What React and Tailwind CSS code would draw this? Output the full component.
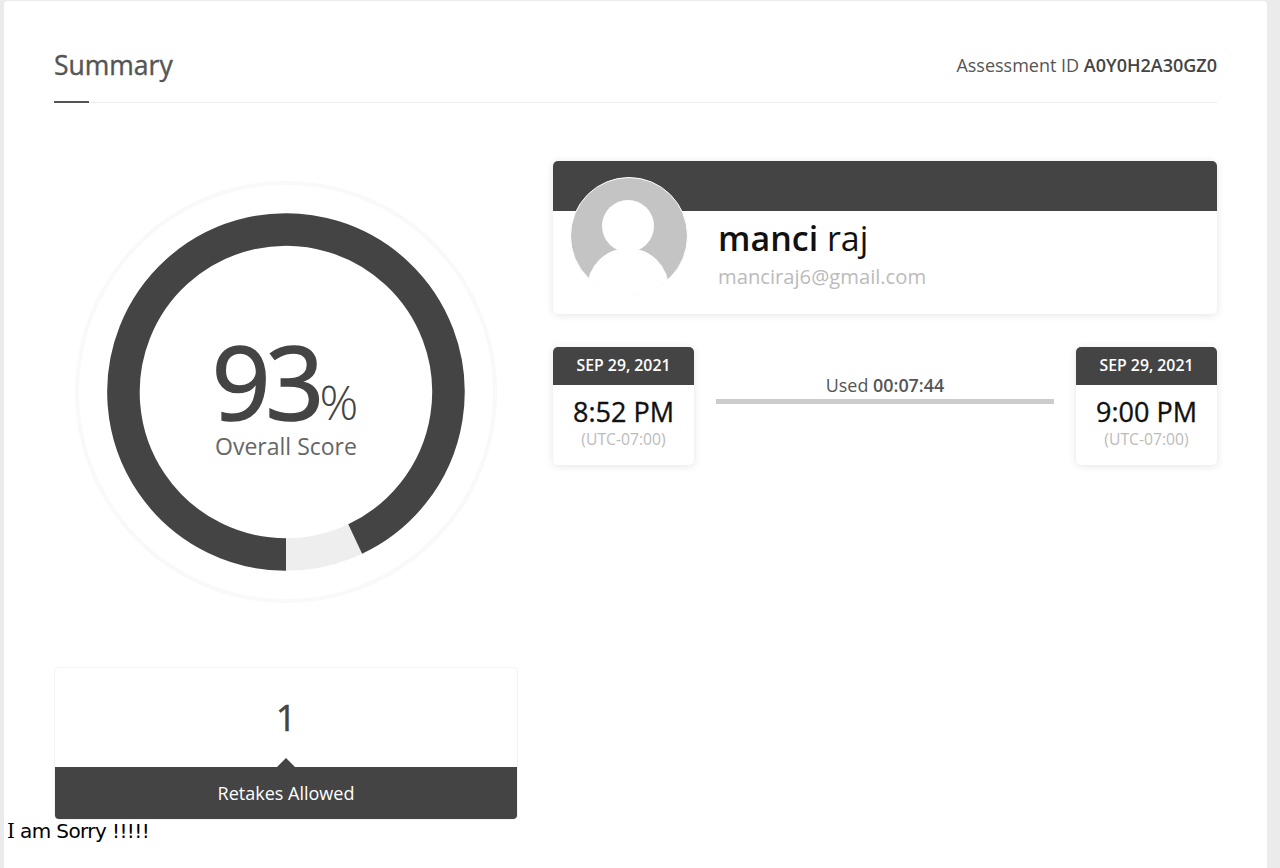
import React from 'react';

const sans = "font-['Open_Sans',sans-serif]";

const TimeCard = ({ date, time }) => (
  <div className="w-[141px] h-[118px] rounded-[5px] bg-white shadow-[0_1px_8px_rgba(0,0,0,0.11)] overflow-hidden shrink-0 text-center">
    <div className="h-[38px] bg-[#444444] text-white text-[15.8px] font-semibold leading-[37px]">{date}</div>
    <div className="mt-[10px] text-[27px] [-webkit-text-stroke:0.35px] leading-[34px] text-[#111111]">{time}</div>
    <div className="text-[15.7px] leading-[20px] text-[#bbbbbb]">(UTC-07:00)</div>
  </div>
);

const ScoreRing = () => (
  <div className="relative w-[424px] h-[424px]">
    <svg width="424" height="424" viewBox="0 0 424 424">
      <circle cx="212" cy="212" r="209" fill="none" stroke="#f9f9f9" strokeWidth="4" />
      <circle cx="212" cy="212" r="162.5" fill="none" stroke="#eeeeee" strokeWidth="32.5" />
      <path d="M212 374.5 A162.5 162.5 0 1 1 281.2 359" fill="none" stroke="#444444" strokeWidth="32.5" />
    </svg>
    <div className="absolute left-0 right-0 top-[147px] flex flex-col items-center">
      <div className="flex items-baseline text-[#444444] h-[103px] -ml-[5px]">
        <span className="text-[103px] [-webkit-text-stroke:1.5px] leading-[106px] tracking-[-5px]">93</span>
        <span className="text-[48px] font-light leading-[106px] tracking-[-3px]">%</span>
      </div>
      <div className="text-[23px] leading-[32px] text-[#666666]">Overall Score</div>
    </div>
  </div>
);

const Avatar = () => (
  <svg width="118" height="118" viewBox="0 0 118 118" className="shrink-0">
    <defs>
      <clipPath id="avatar-clip"><circle cx="59" cy="59" r="58.5" /></clipPath>
    </defs>
    <circle cx="59" cy="59" r="58.5" fill="#c4c4c4" stroke="#ffffff" strokeWidth="1" />
    <g clipPath="url(#avatar-clip)" fill="#ffffff">
      <circle cx="58" cy="49" r="26" />
      <ellipse cx="58" cy="112" rx="41" ry="41" />
    </g>
  </svg>
);

export default function App() {
  return (
    <div className={`min-h-[868px] bg-[#ebebeb] pl-[4px] pr-[13px] pt-[1px] ${sans}`}>
      <div className="relative min-h-[867px] bg-white rounded-t-[4px] px-[50px] pt-[45px]">
        <div className="relative flex items-center justify-between h-[57px] pb-[18px] border-b border-[#eeeeee]">
          <h1 className="text-[26.5px] [-webkit-text-stroke:0.4px] leading-[36px] text-[#555555]">Summary</h1>
          <div className="text-[18px] text-[#555555]">
            Assessment ID <span className="font-semibold text-[#444444]">A0Y0H2A30GZ0</span>
          </div>
          <div className="absolute left-0 -bottom-px w-[35px] h-[2px] bg-[#555555]" />
        </div>

        <div className="flex gap-[35px] pt-[58px]">
          <div className="w-[464px] shrink-0 flex flex-col">
            <div className="flex justify-center mt-[19px]">
              <ScoreRing />
            </div>
            <div className="mt-[63px] rounded-[5px] border border-[#f3f3f3] overflow-hidden">
              <div className="h-[99px] flex items-center justify-center text-[36px] [-webkit-text-stroke:0.5px] text-[#444444]">1</div>
              <div className="relative h-[52px] bg-[#444444] text-white text-[18px] leading-[52px] text-center">
                <div className="absolute left-1/2 -top-[9px] -ml-[9px] w-0 h-0 border-x-[9px] border-x-transparent border-b-[9px] border-b-[#444444]" />
                Retakes Allowed
              </div>
            </div>
          </div>

          <div className="w-[664px] shrink-0">
            <div className="h-[153px] rounded-[5px] bg-white shadow-[0_1px_8px_rgba(0,0,0,0.11)] overflow-hidden">
              <div className="h-[50px] bg-[#444444]" />
              <div className="flex gap-[30px] pl-[17px] -mt-[34px]">
                <Avatar />
                <div className="pt-[39px]">
                  <div className="text-[34px] leading-[44px] text-[#111111]">
                    <span className="font-semibold">manci</span> raj
                  </div>
                  <div className="mt-[2px] text-[20.2px] leading-[28px] text-[#bbbbbb]">manciraj6@gmail.com</div>
                </div>
              </div>
            </div>

            <div className="flex gap-[22px] mt-[33px]">
              <TimeCard date="SEP 29, 2021" time="8:52 PM" />
              <div className="flex-1 pt-[25px]">
                <div className="text-center text-[17.9px] leading-[26px] text-[#555555]">
                  Used <span className="font-semibold">00:07:44</span>
                </div>
                <div className="h-[5px] bg-[#cccccc] mt-[1px]" />
              </div>
              <TimeCard date="SEP 29, 2021" time="9:00 PM" />
            </div>
          </div>
        </div>

        <div className="absolute left-[3px] top-[817px] text-[20px] leading-[26px] text-black font-['DejaVu_Sans',sans-serif] tracking-[-0.6px]">
          <span className="font-['DejaVu_Serif',serif]">I</span> am Sorry !!!!!
        </div>
      </div>
    </div>
  );
}
